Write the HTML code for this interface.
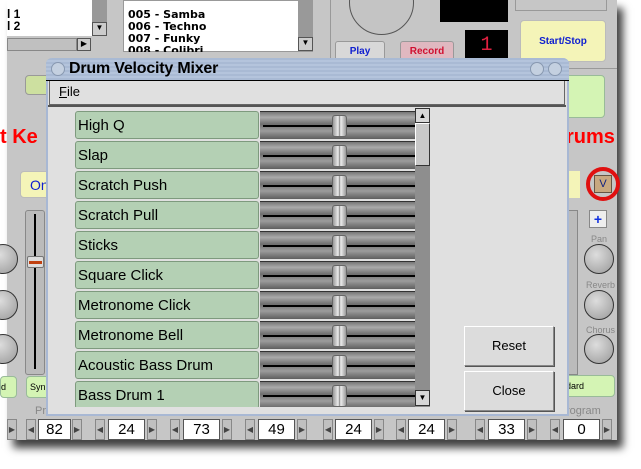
<!DOCTYPE html>
<html><head><style>
*{margin:0;padding:0;box-sizing:border-box}
body{width:641px;height:469px;background:#fff;position:relative;overflow:hidden;font-family:"Liberation Sans",sans-serif}
.a{position:absolute}
.app{left:7px;top:0;width:610px;height:440px;background:#c6c6c6;box-shadow:6px 8px 8px rgba(0,0,0,.75)}
.row{position:absolute;left:75px;width:184px;height:28px;background:#b4d0b4;border:1px solid #7e9a7e;border-radius:3px;font-size:15px;padding:5px 0 0 2px;color:#000}
.sl{position:absolute;left:260px;width:155px;height:28px;background:linear-gradient(#777 0,#aaa 20%,#6e6e6e 45%,#9c9c9c 70%,#5e5e5e 100%);border-top:1px solid #333}
.sl:before{content:"";position:absolute;left:3px;right:0;top:13px;height:2px;background:#000}
.sl:after{content:"";position:absolute;left:72px;top:3px;width:13px;height:20px;border:1px solid #666;border-radius:3px;background:linear-gradient(90deg,#999,#eee 40%,#888 50%,#eee 60%,#999)}
.sp{position:absolute;top:419px;height:21px;background:#fff;border:1px solid #555;font-size:15px;text-align:center;line-height:19px}
.ar{position:absolute;top:419px;width:10px;height:21px;background:#c0c0c0;border:1px solid #888;font-size:8px;line-height:19px;text-align:center;color:#444}
.btn{position:absolute;left:464px;width:90px;height:40px;background:#dcdcdc;border:1px solid #888;border-top-color:#fff;border-left-color:#fff;box-shadow:1px 1px 0 #555;font-size:13px;text-align:center;line-height:38px}
.knob{position:absolute;width:30px;height:30px;border-radius:50%;background:radial-gradient(circle at 40% 35%,#ddd,#999);border:1px solid #333}
.lbl{position:absolute;font-size:9px;color:#888}
</style></head><body>
<div class="a app"></div>
<div class="a" style="left:7px;top:0;width:85px;height:36px;background:#fff"></div>
<div class="a" style="left:7px;top:8px;font-size:12px;font-weight:bold;line-height:12px">l 1<br>l 2</div>
<div class="a" style="left:92px;top:0;width:15px;height:36px;background:#999"></div>
<div class="a" style="left:92px;top:22px;width:15px;height:14px;background:#ccc;border:1px solid #555;font-size:8px;text-align:center">▼</div>
<div class="a" style="left:7px;top:38px;width:70px;height:13px;background:#c0c0c0;border:1px solid #888"></div>
<div class="a" style="left:77px;top:38px;width:14px;height:13px;background:#ccc;border:1px solid #555;font-size:8px;text-align:center">▶</div>
<div class="a" style="left:123px;top:0;width:178px;height:52px;background:#fff;border:1px solid #999"></div>
<div class="a" style="left:128px;top:9px;font-size:11px;font-weight:bold;line-height:12px;font-family:'DejaVu Sans',sans-serif;height:43px;overflow:hidden">005 - Samba<br>006 - Techno<br>007 - Funky<br>008 - Colibri</div>
<div class="a" style="left:298px;top:0;width:15px;height:52px;background:#999"></div>
<div class="a" style="left:298px;top:37px;width:15px;height:14px;background:#ccc;border:1px solid #555;font-size:8px;text-align:center">▼</div>
<div class="a" style="left:330px;top:0;width:1px;height:60px;background:#999"></div>
<div class="a" style="left:349px;top:-30px;width:65px;height:65px;border-radius:50%;border:1px solid #555;background:#c4c4c4"></div>
<div class="a" style="left:440px;top:0;width:68px;height:22px;background:#000"></div>
<div class="a" style="left:465px;top:30px;width:43px;height:32px;background:#000;color:#e02040;font-size:20px;font-family:'Liberation Mono',monospace;text-align:center;line-height:32px">1</div>
<div class="a" style="left:335px;top:41px;width:50px;height:20px;background:#d8d8d8;border:1px solid #999;border-radius:3px;color:#1020d0;font-size:10px;font-weight:bold;text-align:center;line-height:20px">Play</div>
<div class="a" style="left:400px;top:41px;width:54px;height:20px;background:#e0b8c0;border:1px solid #999;border-radius:3px;color:#d01030;font-size:10px;font-weight:bold;text-align:center;line-height:20px">Record</div>
<div class="a" style="left:515px;top:0;width:92px;height:11px;border:1px solid #999;border-top:none"></div>
<div class="a" style="left:520px;top:20px;width:86px;height:42px;background:#f4f4b8;border:1px solid #bbb;border-radius:4px;color:#1020d0;font-size:10px;font-weight:bold;text-align:center;line-height:42px">Start/Stop</div>
<div class="a" style="left:510px;top:68px;width:107px;height:1px;background:#999"></div>
<div class="a" style="left:560px;top:75px;width:45px;height:43px;background:#d4f4b4;border:1px solid #9b9;border-radius:4px"></div>
<div class="a" style="left:25px;top:75px;width:30px;height:20px;background:#cde0a0;border:1px solid #999;border-radius:4px"></div>
<div class="a" style="left:0;top:126px;color:#f00;font-size:20px;font-weight:bold">t Ke</div>
<div class="a" style="left:566px;top:126px;color:#f00;font-size:20px;font-weight:bold">rums</div>
<div class="a" style="left:20px;top:171px;width:30px;height:27px;background:#f4f4b8;border:1px solid #bbb;border-radius:4px;color:#1020d0;font-size:14px;line-height:26px;padding-left:9px">On</div>
<div class="a" style="left:560px;top:171px;width:20px;height:27px;background:#f4f4b8;color:#1020d0;font-size:14px;line-height:26px">n</div>
<div class="a" style="left:586px;top:167px;width:34px;height:34px;border-radius:50%;border:4px solid #e01010"></div>
<div class="a" style="left:594px;top:175px;width:18px;height:18px;background:#c8a880;border:1px solid #654;font-size:11px;text-align:center;color:#102080;line-height:16px">V</div>
<div class="a" style="left:589px;top:210px;width:18px;height:18px;background:#eee;border:1px solid #888;color:#1030e0;font-size:14px;font-weight:bold;text-align:center;line-height:16px">+</div>
<div class="lbl" style="left:591px;top:234px">Pan</div>
<div class="knob" style="left:584px;top:244px"></div>
<div class="lbl" style="left:586px;top:280px">Reverb</div>
<div class="knob" style="left:584px;top:290px"></div>
<div class="lbl" style="left:586px;top:325px">Chorus</div>
<div class="knob" style="left:584px;top:334px"></div>
<div class="knob" style="left:-12px;top:244px"></div>
<div class="knob" style="left:-12px;top:290px"></div>
<div class="knob" style="left:-12px;top:334px"></div>
<div class="a" style="left:25px;top:210px;width:20px;height:165px;background:#bbb;border:1px solid #888;border-radius:3px"></div>
<div class="a" style="left:34px;top:214px;width:2px;height:155px;background:#000"></div>
<div class="a" style="left:27px;top:256px;width:17px;height:12px;background:#ddd;border:1px solid #777;border-radius:2px"></div>
<div class="a" style="left:29px;top:261px;width:13px;height:3px;background:#c04010"></div>
<div class="a" style="left:566px;top:210px;width:12px;height:165px;background:#bbb;border:1px solid #888"></div>
<div class="a" style="left:0;top:376px;width:17px;height:22px;background:#d4f4b4;border:1px solid #9b9;border-radius:4px;font-size:9px;line-height:20px">d</div>
<div class="a" style="left:26px;top:376px;width:25px;height:22px;background:#d4f4b4;border:1px solid #9b9;border-radius:4px;font-size:9px;line-height:20px;padding-left:3px">Syn</div>
<div class="a" style="left:560px;top:375px;width:55px;height:22px;background:#d4f4b4;border:1px solid #9b9;border-radius:4px;font-size:9px;line-height:20px">ndard</div>
<div class="lbl" style="left:35px;top:405px;font-size:11px">Pr</div>
<div class="lbl" style="left:566px;top:405px;font-size:11px">rogram</div>
<div class="ar" style="left:7px">▶</div>
<div class="ar" style="left:26px">◀</div><div class="sp" style="left:38px;width:33px">82</div><div class="ar" style="left:72px">▶</div>
<div class="ar" style="left:95px">◀</div><div class="sp" style="left:108px;width:37px">24</div><div class="ar" style="left:147px">▶</div>
<div class="ar" style="left:170px">◀</div><div class="sp" style="left:183px;width:37px">73</div><div class="ar" style="left:222px">▶</div>
<div class="ar" style="left:245px">◀</div><div class="sp" style="left:258px;width:37px">49</div><div class="ar" style="left:297px">▶</div>
<div class="ar" style="left:323px">◀</div><div class="sp" style="left:335px;width:37px">24</div><div class="ar" style="left:374px">▶</div>
<div class="ar" style="left:396px">◀</div><div class="sp" style="left:408px;width:37px">24</div><div class="ar" style="left:447px">▶</div>
<div class="ar" style="left:475px">◀</div><div class="sp" style="left:488px;width:37px">33</div><div class="ar" style="left:527px">▶</div>
<div class="ar" style="left:550px">◀</div><div class="sp" style="left:563px;width:37px">0</div><div class="ar" style="left:602px">▶</div>
<div class="a" style="left:46px;top:58px;width:523px;height:358px;background:#e0e0e0;border:2px solid #a8b8d4;border-top:none;border-radius:6px 6px 0 0"></div>
<div class="a" style="left:46px;top:58px;width:523px;height:23px;background:repeating-linear-gradient(#a9bad4 0,#a9bad4 2px,#b4c4dc 2px,#b4c4dc 4px);border-radius:6px 6px 0 0;border-bottom:1px solid #000"></div>
<div class="a" style="left:51px;top:62px;width:14px;height:14px;border-radius:50%;background:#c4d0e0;border:1px solid #8898b0"></div>
<div class="a" style="left:530px;top:62px;width:14px;height:14px;border-radius:50%;background:#c4d0e0;border:1px solid #8898b0"></div>
<div class="a" style="left:548px;top:62px;width:14px;height:14px;border-radius:50%;background:#c4d0e0;border:1px solid #8898b0"></div>
<div class="a" style="left:69px;top:60px;font-size:16px;font-weight:bold;font-family:'Liberation Sans',sans-serif;letter-spacing:-0.2px">Drum Velocity Mixer</div>
<div class="a" style="left:49px;top:81px;width:516px;height:24px;background:#e0e0e0;border:1px solid #666;border-top:none;font-size:13px;padding:3px 0 0 9px"><u>F</u>ile</div>
<div class="a" style="left:48px;top:105px;width:518px;height:2px;background:#555"></div>
<div class="a" style="left:75px;top:110px;width:340px;height:297px;overflow:hidden">
<div style="position:relative;left:-75px;top:-110px">
<div class="row" style="top:111px">High Q</div><div class="sl" style="top:111px"></div>
<div class="row" style="top:141px">Slap</div><div class="sl" style="top:141px"></div>
<div class="row" style="top:171px">Scratch Push</div><div class="sl" style="top:171px"></div>
<div class="row" style="top:201px">Scratch Pull</div><div class="sl" style="top:201px"></div>
<div class="row" style="top:231px">Sticks</div><div class="sl" style="top:231px"></div>
<div class="row" style="top:261px">Square Click</div><div class="sl" style="top:261px"></div>
<div class="row" style="top:291px">Metronome Click</div><div class="sl" style="top:291px"></div>
<div class="row" style="top:321px">Metronome Bell</div><div class="sl" style="top:321px"></div>
<div class="row" style="top:351px">Acoustic Bass Drum</div><div class="sl" style="top:351px"></div>
<div class="row" style="top:381px">Bass Drum 1</div><div class="sl" style="top:381px"></div>
</div></div>
<div class="a" style="left:415px;top:108px;width:15px;height:299px;background:#8e8e8e"></div>
<div class="a" style="left:415px;top:108px;width:15px;height:15px;background:#d8d8d8;border:1px solid #333;font-size:8px;text-align:center;line-height:13px">▲</div>
<div class="a" style="left:415px;top:123px;width:15px;height:43px;background:#c8c8c8;border:1px solid #333;border-top-color:#fff;border-left-color:#fff"></div>
<div class="a" style="left:415px;top:390px;width:15px;height:16px;background:#d8d8d8;border:1px solid #333;font-size:8px;text-align:center;line-height:14px">▼</div>
<div class="btn" style="top:326px">Reset</div>
<div class="btn" style="top:371px">Close</div>
</body></html>
